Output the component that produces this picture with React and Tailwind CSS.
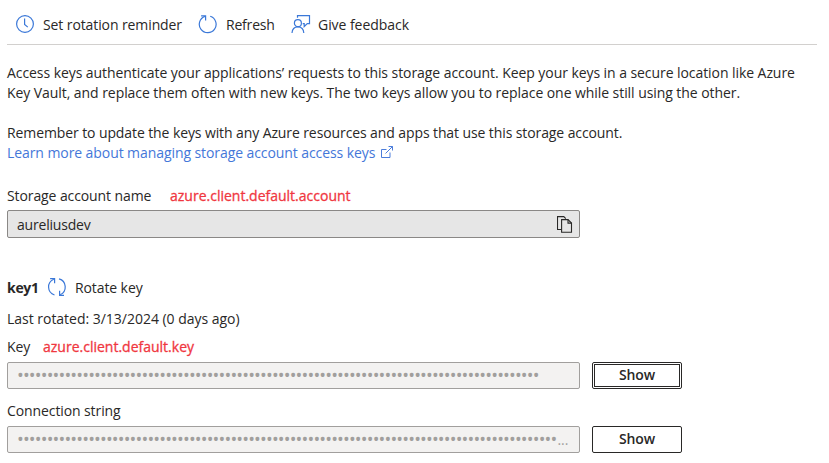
const FONT = "font-['Open_Sans','Noto_Sans',sans-serif]";

function Clock() {
  return (
    <svg width="18" height="18" viewBox="0 0 18 18" fill="none" stroke="#3b78d8" strokeWidth="1.2" className="shrink-0">
      <circle cx="9" cy="9" r="8.4" />
      <path d="M8.6 3.5v6l3.2 2.6" />
    </svg>
  );
}

function Refresh() {
  return (
    <svg width="20" height="20" viewBox="0 0 20 20" fill="none" stroke="#3b78d8" strokeWidth="1.2" className="shrink-0">
      <path d="M12.2 2.3A8.4 8.4 0 1 1 6.9 2.4" />
      <path d="M3.1 1.9h4.5v4.5" />
    </svg>
  );
}

function Feedback() {
  return (
    <svg width="20" height="20" viewBox="0 0 20 20" fill="none" stroke="#3b78d8" strokeWidth="1.2" className="shrink-0">
      <path d="M6.500 3.800V1.600h12v8h-2.200l-3.100 2.900V9.600h-1.500" />
      <circle cx="6.900" cy="9.200" r="3.500" />
      <path d="M1 19c.2-4 2.600-6.200 5.900-6.200s5.700 2.200 5.900 6.200" />
    </svg>
  );
}

function Rotate() {
  return (
    <svg width="20" height="20" viewBox="0 0 20 20" fill="none" stroke="#3b78d8" strokeWidth="1.2" className="shrink-0">
      <path d="M6.800 2.200A8.400 8.400 0 0 0 7.500 18" />
      <path d="M3.100 1.700h4.500v4.500" />
      <path d="M12 1.900a8.400 8.400 0 0 1 1.200 15.800" />
      <path d="M17 18.300h-4.400v-4.500" />
    </svg>
  );
}

function External() {
  return (
    <svg width="12" height="12" viewBox="0 0 12 12" fill="none" stroke="#4b7ddb" strokeWidth="1" className="relative -top-px shrink-0">
      <path d="M5.500 3.500h-5v8h8.500v-5" />
      <path d="M4.500 7.500l7-7M7.500 .5h4v4" />
    </svg>
  );
}

function Copy() {
  return (
    <svg width="16" height="17" viewBox="0 0 16 17" fill="none" stroke="#292827" strokeWidth="1.100" className="shrink-0">
      <path d="M4.500 13.500h-4V.6h6.300l2 2" />
      <path d="M4.600 3.600h6.400l3.500 3.500v9.200H4.600z" />
      <path d="M11 3.600v3.500h3.500" />
    </svg>
  );
}

function Annotation({ children }) {
  return (
    <span className="text-[14px] text-[#f0373f] [-webkit-text-stroke:0.3px_#f0373f]">{children}</span>
  );
}

function SecretRow({ count, clipped, focused }) {
  return (
    <div className="flex h-[27px] gap-3">
      <div className="flex w-[573px] items-center whitespace-nowrap rounded-[2px] border border-[#a19f9d] bg-[#f3f2f1] pl-[9px] text-[#a19f9d]">
        <span className="pb-px text-[18px] leading-5 tracking-[-0.84px]">{"•".repeat(count)}</span>
        {clipped && <span className="ml-px text-[14px] leading-5">...</span>}
      </div>
      <button className="h-[27px] w-[90px] rounded-[2px] border border-[#292827] bg-white p-px">
        <span className={`flex h-full items-center justify-center border pb-[2px] text-[14px] font-semibold tracking-[-0.1px] ${focused ? "border-[#292827]" : "border-transparent"}`}>
          Show
        </span>
      </button>
    </div>
  );
}

export default function App() {
  return (
    <main className={`${FONT} h-[463px] w-[829px] overflow-hidden bg-white pl-[7px] text-[14px] leading-5 text-[#292827]`}>
      <header className="flex h-[45px] w-[810px] items-center border-b border-[#d2d0ce] pl-[9px] pt-1 whitespace-nowrap">
        <Clock />
        <span className="ml-[9px] w-[155px] pt-[2px] tracking-[-0.1px]">Set rotation reminder</span>
        <Refresh />
        <span className="ml-[8px] w-[65px] pt-[2px] tracking-[-0.2px]">Refresh</span>
        <Feedback />
        <span className="ml-[7px] pt-[2px] tracking-[-0.05px]">Give feedback</span>
      </header>

      <section className="mt-[18px] whitespace-nowrap">
        <p className="tracking-[-0.067px]">Access keys authenticate your applications’ requests to this storage account. Keep your keys in a secure location like Azure</p>
        <p className="tracking-[-0.065px]">Key Vault, and replace them often with new keys. The two keys allow you to replace one while still using the other.</p>
        <p className="mt-5 tracking-[-0.1px]">Remember to update the keys with any Azure resources and apps that use this storage account.</p>
        <a className="flex items-center gap-[6px] text-[#4477d9]">
          <span className="tracking-[-0.08px]">Learn more about managing storage account access keys</span>
          <External />
        </a>
      </section>

      <section className="mt-[23px] whitespace-nowrap">
        <div className="flex h-5">
          <span className="w-[163px] tracking-[-0.1px]">Storage account name</span>
          <Annotation>azure.client.default.account</Annotation>
        </div>
        <div className="mt-1 flex h-7 w-[573px] items-center justify-between rounded-[2px] border border-[#8a8886] bg-[#e6e6e6] pl-[9px] pr-[6px]">
          <span className="pt-[2px] tracking-[-0.2px]">aureliusdev</span>
          <Copy />
        </div>
      </section>

      <section className="mt-[39px] whitespace-nowrap">
        <div className="flex h-5 items-center">
          <span className="w-[40px] pt-[2px] font-bold tracking-[-0.3px]">key1</span>
          <Rotate />
          <span className="ml-[8px] pt-[2px] tracking-[-0.1px]">Rotate key</span>
        </div>
        <p className="mt-3 tracking-[-0.02px]">Last rotated: 3/13/2024 (0 days ago)</p>
        <div className="mt-2 flex h-5">
          <span className="w-[36px] tracking-[-0.1px]">Key</span>
          <Annotation>azure.client.default.key</Annotation>
        </div>
        <div className="mt-[5px]">
          <SecretRow count={88} focused />
        </div>
        <p className="mt-3 tracking-[-0.1px]">Connection string</p>
        <div className="mt-[5px]">
          <SecretRow count={91} clipped />
        </div>
      </section>
    </main>
  );
}
